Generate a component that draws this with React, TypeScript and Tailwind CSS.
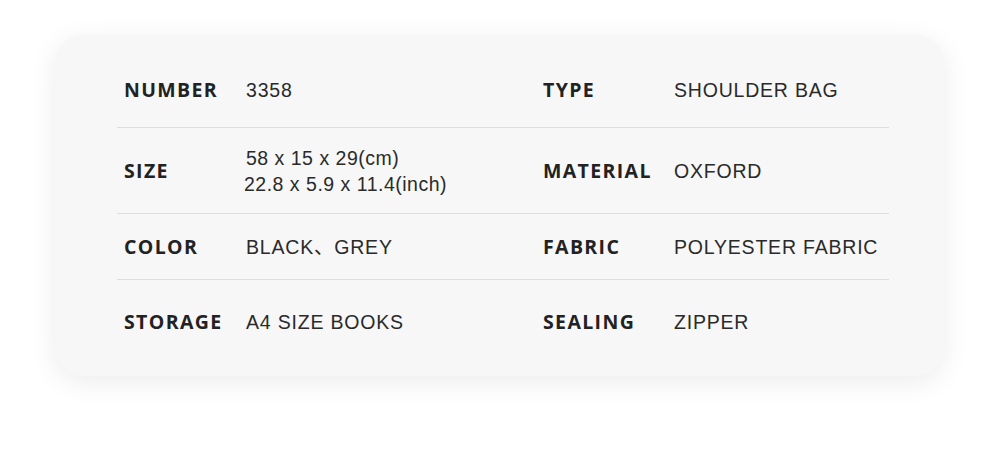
import React from "react"

type Spec = { label: string; value: string[] }

const rows: { left: Spec; right: Spec; h: string }[] = [
  {
    left: { label: "NUMBER", value: ["3358"] },
    right: { label: "TYPE", value: ["SHOULDER BAG"] },
    h: "h-[76px]",
  },
  {
    left: { label: "SIZE", value: ["58 x 15 x 29(cm)", "22.8 x 5.9 x 11.4(inch)"] },
    right: { label: "MATERIAL", value: ["OXFORD"] },
    h: "h-[86px]",
  },
  {
    left: { label: "COLOR", value: ["BLACK、GREY"] },
    right: { label: "FABRIC", value: ["POLYESTER FABRIC"] },
    h: "h-[66px]",
  },
  {
    left: { label: "STORAGE", value: ["A4 SIZE BOOKS"] },
    right: { label: "SEALING", value: ["ZIPPER"] },
    h: "h-[84px]",
  },
]

function Cell({ spec, labelW }: { spec: Spec; labelW: string }) {
  const multi = spec.value.length > 1
  return (
    <div className="flex items-center">
      <div
        className={`${labelW} pl-[7px] font-['Open_Sans',sans-serif] text-[19.5px] font-bold tracking-[0.07em] text-[#222]`}
      >
        {spec.label}
      </div>
      <div
        className={`font-['Liberation_Sans','Noto_Sans_CJK_SC',sans-serif] text-[19.5px] leading-[26px] text-[#2a2a2a] ${
          multi ? "tracking-[0.5px]" : "tracking-[0.8px]"
        }`}
      >
        {spec.value.map((v, i) => (
          <div key={v} className={multi && i > 0 ? "-ml-[2px]" : ""}>
            {v}
          </div>
        ))}
      </div>
    </div>
  )
}

export default function App() {
  return (
    <div className="h-[451px] w-[1000px] bg-white pt-[35px] pl-[55px]">
      <div className="h-[341px] w-[889px] rounded-[28px] bg-[#f7f7f7] pt-[17px] pl-[62px] shadow-[0_6px_28px_rgba(0,0,0,0.08)]">
        <div className="w-[772px]">
          {rows.map((r, i) => (
            <div
              key={r.left.label}
              className={`grid grid-cols-[419px_1fr] ${r.h} ${
                i < rows.length - 1 ? "border-b border-[#dedede]" : ""
              }`}
            >
              <Cell spec={r.left} labelW="w-[129px]" />
              <Cell spec={r.right} labelW="w-[138px]" />
            </div>
          ))}
        </div>
      </div>
    </div>
  )
}
